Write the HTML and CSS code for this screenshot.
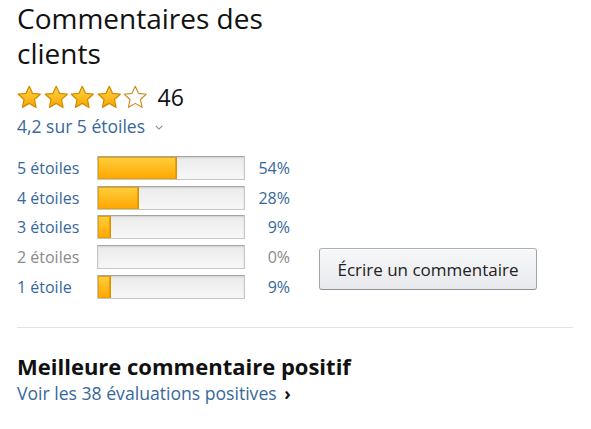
FILE: index.html
```html
<!DOCTYPE html>
<html lang="fr">
<head>
<meta charset="utf-8">
<link rel="stylesheet" href="styles.css">
</head>
<body>
<div class="page">
  <h2 class="title">Commentaires des clients</h2>
  <div class="stars-row">
    <span class="stars">
      <svg class="star" viewBox="0 0 24 24"><defs><linearGradient id="g" x1="0" y1="0" x2="0" y2="1"><stop offset="0" stop-color="#ffd64a"/><stop offset="1" stop-color="#f7a600"/></linearGradient></defs><polygon points="12,1.2 15.2,8.2 22.8,9 17.1,14.2 18.7,21.9 12,18 5.3,21.9 6.9,14.2 1.2,9 8.8,8.2" fill="url(#g)" stroke="#d48c00" stroke-width="1.2" stroke-linejoin="round"/></svg>
      <svg class="star" viewBox="0 0 24 24"><polygon points="12,1.2 15.2,8.2 22.8,9 17.1,14.2 18.7,21.9 12,18 5.3,21.9 6.9,14.2 1.2,9 8.8,8.2" fill="url(#g)" stroke="#d48c00" stroke-width="1.2" stroke-linejoin="round"/></svg>
      <svg class="star" viewBox="0 0 24 24"><polygon points="12,1.2 15.2,8.2 22.8,9 17.1,14.2 18.7,21.9 12,18 5.3,21.9 6.9,14.2 1.2,9 8.8,8.2" fill="url(#g)" stroke="#d48c00" stroke-width="1.2" stroke-linejoin="round"/></svg>
      <svg class="star" viewBox="0 0 24 24"><polygon points="12,1.2 15.2,8.2 22.8,9 17.1,14.2 18.7,21.9 12,18 5.3,21.9 6.9,14.2 1.2,9 8.8,8.2" fill="url(#g)" stroke="#d48c00" stroke-width="1.2" stroke-linejoin="round"/></svg>
      <svg class="star" viewBox="0 0 24 24"><polygon points="12,1.2 15.2,8.2 22.8,9 17.1,14.2 18.7,21.9 12,18 5.3,21.9 6.9,14.2 1.2,9 8.8,8.2" fill="#fff" stroke="#c98a1a" stroke-width="1.1" stroke-linejoin="round"/></svg>
    </span>
    <span class="count">46</span>
  </div>
  <a class="link avg">4,2 sur 5 étoiles <svg class="chev" viewBox="0 0 10 6"><path d="M1 1 L5 5 L9 1" fill="none" stroke="#8a8a8a" stroke-width="1.3"/></svg></a>

  <div class="summary">
    <table class="histo">
      <tr><td class="lbl">5 étoiles</td><td class="barcell"><div class="bar"><div class="fill" style="width:54%"></div></div></td><td class="pct">54%</td></tr>
      <tr><td class="lbl">4 étoiles</td><td class="barcell"><div class="bar"><div class="fill" style="width:28%"></div></div></td><td class="pct">28%</td></tr>
      <tr><td class="lbl">3 étoiles</td><td class="barcell"><div class="bar"><div class="fill" style="width:9%"></div></div></td><td class="pct">9%</td></tr>
      <tr class="off"><td class="lbl">2 étoiles</td><td class="barcell"><div class="bar"></div></td><td class="pct">0%</td></tr>
      <tr><td class="lbl">1 étoile</td><td class="barcell"><div class="bar"><div class="fill" style="width:9%"></div></div></td><td class="pct">9%</td></tr>
    </table>
    <div class="write">
      <button class="btn">Écrire un commentaire</button>
    </div>
  </div>

  <hr class="divider">

  <h3 class="sub">Meilleure commentaire positif</h3>
  <a class="link more">Voir les 38 évaluations positives <span class="arrow">›</span></a>
</div>
</body>
</html>
```

FILE: styles.css
```css
* { box-sizing: border-box; }
html, body { margin: 0; padding: 0; background: #fff; }
body {
  font-family: "Open Sans", "Noto Sans", "Liberation Sans", sans-serif;
  color: #111;
}
.page {
  padding: 0 18px 0 17px;
  width: 591px;
}
.title {
  margin: 0;
  padding-top: 1px;
  font-weight: 400;
  font-size: 28px;
  line-height: 35px;
  width: 280px;
  color: #111;
}
.stars-row {
  display: flex;
  align-items: center;
  margin-top: 13px;
  height: 26px;
}
.stars { display: flex; gap: 2px; }
.star { width: 24.5px; height: 24.5px; display: block; }
.count {
  margin-left: 10px;
  font-size: 23px;
  line-height: 26px;
}
.link {
  color: #36689c;
  text-decoration: none;
}
.avg {
  display: inline-flex;
  align-items: center;
  margin-top: 5px;
  font-size: 17.5px;
  line-height: 22px;
}
.chev { width: 8px; height: 5px; margin-left: 10px; margin-top: 3px; }
.summary {
  display: flex;
  align-items: flex-start;
  margin-top: 15px;
}
.histo {
  border-collapse: collapse;
}
.histo td { padding: 0; height: 29.75px; }
.lbl {
  color: #36689c;
  font-size: 16px;
  width: 80px;
  white-space: nowrap;
}
.barcell { width: 148px; }
.bar {
  width: 148px;
  height: 24px;
  border: 1px solid #c6c6c6;
  border-top-color: #a5a5a5;
  border-radius: 1px;
  background: linear-gradient(#ebebeb, #f7f7f7);
  box-shadow: inset 0 1px 2px rgba(0,0,0,0.12);
  overflow: hidden;
}
.fill {
  height: 100%;
  background: linear-gradient(#ffcf3d, #ffa600);
  border-right: 1px solid #d99400;
  box-shadow: inset 0 0 0 1px #e9a000;
}
.pct {
  color: #36689c;
  font-size: 16px;
  text-align: right;
  width: 45px;
}
.off .lbl, .off .pct { color: #8a8a8a; }
.write {
  margin-left: 29px;
  padding-top: 95px;
}
.btn {
  width: 218px;
  height: 42px;
  font-family: inherit;
  font-size: 17px;
  color: #222;
  border: 1px solid #adb1b8;
  border-color: #adb1b8 #a2a6ac #8d9096;
  border-radius: 3px;
  background: linear-gradient(#f7f8fa, #e7e9ec);
  box-shadow: inset 0 1px 0 rgba(255,255,255,.6);
  padding: 0;
}
.divider {
  border: 0;
  border-top: 1px solid #e3e3e3;
  margin: 25px 0 0 0;
  width: 556px;
}
.sub {
  margin: 25px 0 0 0;
  font-size: 22px;
  font-weight: 700;
  line-height: 27px;
}
.more {
  display: block;
  font-size: 17.6px;
  line-height: 22px;
  margin-top: 2px;
}
.arrow { color: #111; font-weight: 700; margin-left: 3px; }
```
